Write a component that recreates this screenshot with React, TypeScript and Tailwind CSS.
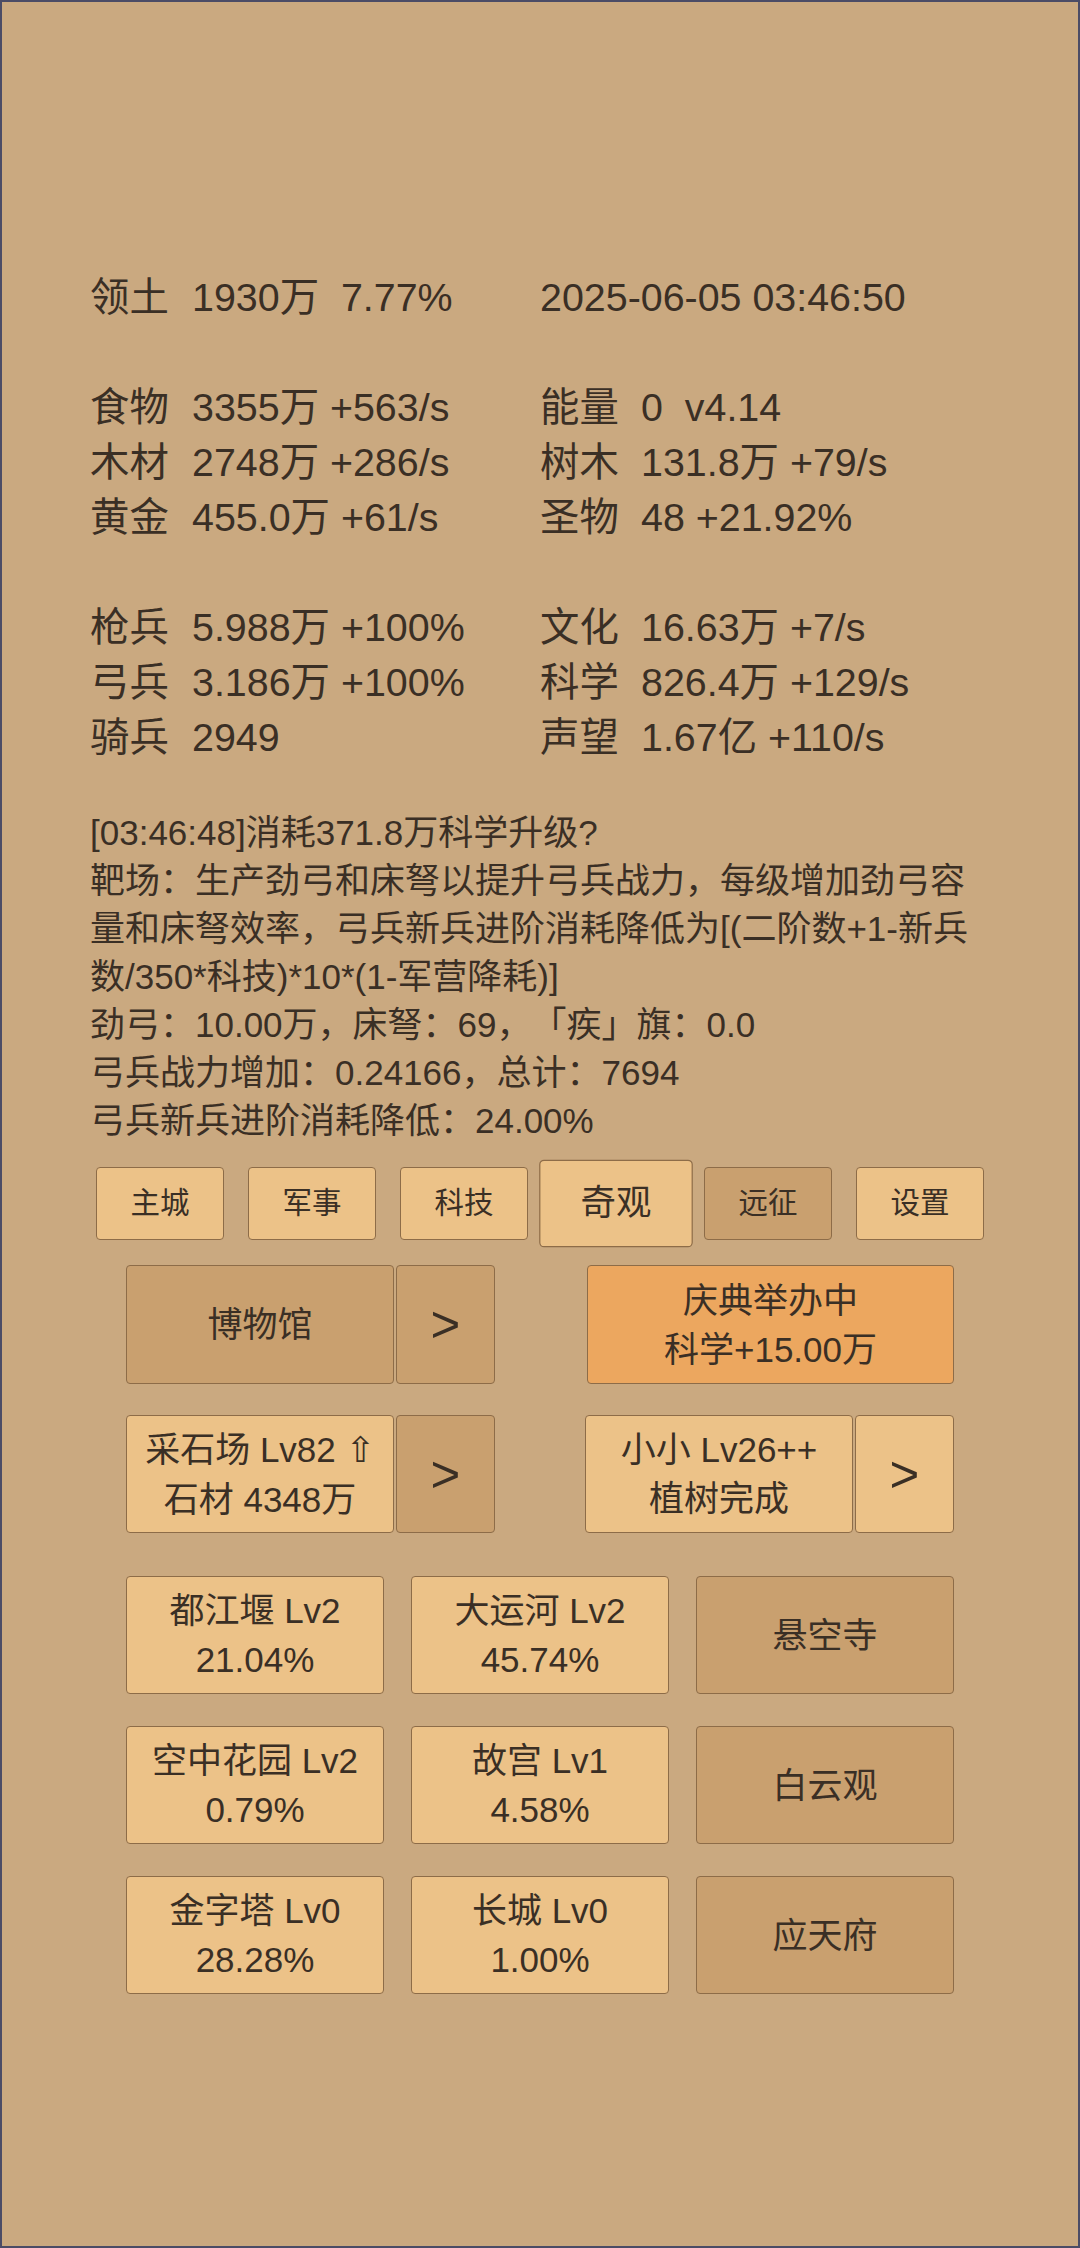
import type { ReactNode } from 'react';

const font = { fontFamily: '"Liberation Sans", "Noto Sans CJK SC", sans-serif' };

const stats: [string, string, string, string][] = [
  ['领土', '1930万  7.77%', '', '2025-06-05 03:46:50'],
  ['', '', '', ''],
  ['食物', '3355万 +563/s', '能量', '0  v4.14'],
  ['木材', '2748万 +286/s', '树木', '131.8万 +79/s'],
  ['黄金', '455.0万 +61/s', '圣物', '48 +21.92%'],
  ['', '', '', ''],
  ['枪兵', '5.988万 +100%', '文化', '16.63万 +7/s'],
  ['弓兵', '3.186万 +100%', '科学', '826.4万 +129/s'],
  ['骑兵', '2949', '声望', '1.67亿 +110/s'],
];

const logLines = [
  '[03:46:48]消耗371.8万科学升级?',
  '靶场：生产劲弓和床弩以提升弓兵战力，每级增加劲弓容量和床弩效率，弓兵新兵进阶消耗降低为[(二阶数+1-新兵数/350*科技)*10*(1-军营降耗)]',
  '劲弓：10.00万，床弩：69，「疾」旗：0.0',
  '弓兵战力增加：0.24166，总计：7694',
  '弓兵新兵进阶消耗降低：24.00%',
];

const tabs = [
  { name: '主城', tone: 'light' },
  { name: '军事', tone: 'light' },
  { name: '科技', tone: 'light' },
  { name: '奇观', tone: 'active' },
  { name: '远征', tone: 'dark' },
  { name: '设置', tone: 'light' },
];

const wonders = [
  { a: '都江堰 Lv2', b: '21.04%' },
  { a: '大运河 Lv2', b: '45.74%' },
  { a: '悬空寺' },
  { a: '空中花园 Lv2', b: '0.79%' },
  { a: '故宫 Lv1', b: '4.58%' },
  { a: '白云观' },
  { a: '金字塔 Lv0', b: '28.28%' },
  { a: '长城 Lv0', b: '1.00%' },
  { a: '应天府' },
];

const tone = {
  light: 'bg-[#ecc288]',
  dark: 'bg-[#c9a06f]',
  orange: 'bg-[#eca75f]',
};

function Box({ t, className, children }: { t: keyof typeof tone; className: string; children: ReactNode }) {
  return (
    <div
      className={`${tone[t]} ${className} flex flex-col items-center justify-center rounded-[4px] border-[1.5px] border-[#8d6c48] text-center`}
    >
      {children}
    </div>
  );
}

function Arrow({ t }: { t: keyof typeof tone }) {
  return (
    <Box t={t} className="ml-[2px] h-full w-[99px] text-[51px] leading-none">
      &gt;
    </Box>
  );
}

export default function App() {
  return (
    <div
      style={font}
      className="box-border h-[2248px] w-[1080px] overflow-hidden border-2 border-[#4b4c66] bg-[#caa980] pt-[268px] text-[#3a2f25] [text-spacing-trim:space-all]"
    >
      {/* resources */}
      <div className="grid grid-cols-2 px-[88px] text-[39.4px] leading-[55px]">
        {stats.map(([l1, v1, l2, v2], i) => (
          <div key={i} className="contents">
            <div className="flex h-[55px] whitespace-pre">
              <span className="w-[102px]">{l1}</span>
              <span>{v1}</span>
            </div>
            <div className="flex h-[55px] whitespace-pre">
              {l2 && <span className="w-[101px]">{l2}</span>}
              <span>{v2}</span>
            </div>
          </div>
        ))}
      </div>

      {/* log */}
      <div className="mt-[44px] px-[88px] text-[35px] leading-[48px]">
        {logLines.map((line, i) => (
          <div key={i}>{line}</div>
        ))}
      </div>

      {/* tabs */}
      <div className="mt-[22px] flex justify-center">
        {tabs.map((tab) => (
          <Box
            key={tab.name}
            t={tab.tone === 'dark' ? 'dark' : 'light'}
            className={`mx-[12px] h-[73px] w-[128px] text-[29.5px] ${tab.tone === 'active' ? 'scale-[1.2]' : ''}`}
          >
            {tab.name}
          </Box>
        ))}
      </div>

      {/* buildings */}
      <div className="mx-auto mt-[25px] w-[828px] text-[35px] leading-[49px]">
        <div className="flex h-[119px] justify-between">
          <div className="flex">
            <Box t="dark" className="h-full w-[268px]">博物馆</Box>
            <Arrow t="dark" />
          </div>
          <Box t="orange" className="h-full w-[367px]">
            <div>庆典举办中</div>
            <div>科学+15.00万</div>
          </Box>
        </div>

        <div className="mt-[31px] flex h-[118px] justify-between">
          <div className="flex">
            <Box t="light" className="h-full w-[268px]">
              <div className="whitespace-nowrap">
                采石场 Lv82 <span style={{ fontFamily: '"DejaVu Sans", sans-serif' }}>⇧</span>
              </div>
              <div>石材 4348万</div>
            </Box>
            <Arrow t="dark" />
          </div>
          <div className="flex">
            <Box t="light" className="h-full w-[268px]">
              <div>小小 Lv26++</div>
              <div>植树完成</div>
            </Box>
            <Arrow t="light" />
          </div>
        </div>

        <div className="mt-[43px] grid grid-cols-3 gap-x-[27px] gap-y-[32px]">
          {wonders.map((w) => (
            <Box key={w.a} t={w.b ? 'light' : 'dark'} className="h-[118px]">
              <div>{w.a}</div>
              {w.b && <div>{w.b}</div>}
            </Box>
          ))}
        </div>
      </div>
    </div>
  );
}
